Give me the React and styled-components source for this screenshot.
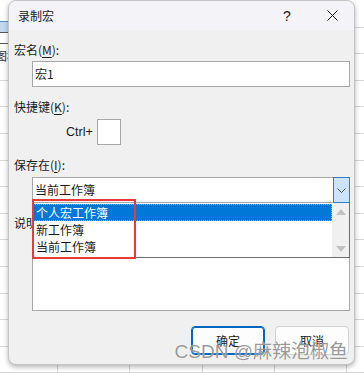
import React from 'react';
import styled, { createGlobalStyle } from 'styled-components';

const GlobalStyle = createGlobalStyle`
    html, body {
        margin: 0;
        padding: 0;
    }
    body {
        width: 364px;
        height: 373px;
        overflow: hidden;
        font-family: "Noto Sans CJK SC", "Liberation Sans", sans-serif;
        font-size: 12px;
        color: #1a1a1a;
    }
`;

// spreadsheet behind the dialog
const Desktop = styled.div`
    position: relative;
    width: 364px;
    height: 373px;
    box-sizing: border-box;
    padding-left: 8px;
    overflow: hidden;
    background-color: #ffffff;
    background-image:
        repeating-linear-gradient(to right, transparent 0 57px, #d6d6d6 57px 58px, transparent 58px 72.3px),
        repeating-linear-gradient(to bottom, transparent 0 25.6px, #d6d6d6 25.6px 26.6px);
    background-position: 0 0, 0 1px;
`;

const SheetCell = styled.div`
    position: absolute;
    left: -2px;
    width: 9px;
    height: 10px;
    top: ${p => p.top}px;
    background: ${p => p.selected ? '#c3d9f0' : '#ffffff'};
    border: 1px solid ${p => p.selected ? '#5b8fc9' : '#5a5a5a'};
`;

const SheetText = styled.span`
    position: absolute;
    left: -5px;
    top: 49px;
    font-size: 12px;
    line-height: 14px;
    color: #333;
`;

const Dialog = styled.div`
    position: relative;
    width: 347px;
    height: 365px;
    box-sizing: border-box;
    background: #f0f0f0;
    border: 1px solid #c4c4c4;
    border-radius: 8px;
    box-shadow: 0 2px 5px rgba(0, 0, 0, 0.3);
    display: flex;
    flex-direction: column;
`;

const TitleBar = styled.div`
    height: 29px;
    flex: none;
    display: flex;
    align-items: center;
    background: #f3f3f8;
    border-radius: 8px 8px 0 0;
    padding-left: 9px;
`;

const Title = styled.div`
    flex: 1;
    font-size: 12px;
    line-height: 16px;
    color: #1a1a1a;
`;

const TitleButton = styled.div`
    width: ${p => p.w}px;
    height: 29px;
    display: flex;
    align-items: center;
    justify-content: center;
    font-family: "Liberation Sans", sans-serif;
    font-size: 14px;
    color: #1a1a1a;
`;

const Body = styled.div`
    flex: 1;
    display: flex;
    flex-direction: column;
    padding: 12px 4px 0 5px;
`;

const Label = styled.div`
    height: 16px;
    line-height: 16px;
    font-size: 12px;
    color: #1a1a1a;
    margin-top: ${p => p.gap || 0}px;

    u {
        text-decoration-thickness: 1px;
        text-underline-offset: 2px;
    }
`;

const Indent = styled.div`
    margin-left: 18px;
    margin-top: ${p => p.gap || 0}px;
    position: relative;
`;

const TextBox = styled.div`
    box-sizing: border-box;
    height: ${p => p.h || 26}px;
    width: ${p => p.w ? `${p.w}px` : '100%'};
    background: #ffffff;
    border: 1px solid #a8a8a8;
    padding-left: 2px;
    display: flex;
    align-items: ${p => p.top ? 'flex-start' : 'center'};
    font-size: 12px;
    line-height: 16px;
`;

const ShortcutRow = styled.div`
    display: flex;
    align-items: center;
    margin-left: 52px;
    margin-top: 4px;
    gap: 4px;
    height: 26px;
`;

const CtrlText = styled.span`
    font-family: "Liberation Sans", sans-serif;
    font-size: 12.5px;
`;

const Combo = styled.div`
    box-sizing: border-box;
    height: 26px;
    background: #ffffff;
    border: 1px solid #a8a8a8;
    display: flex;
    align-items: center;
    padding-left: 2px;
`;

const ComboText = styled.div`
    flex: 1;
    line-height: 16px;
`;

const ComboButton = styled.div`
    box-sizing: border-box;
    width: 17px;
    height: 26px;
    margin: -1px -1px -1px 0;
    background: #cce4f7;
    border: 1px solid #2f7fc9;
    display: flex;
    align-items: center;
    justify-content: center;
`;

const DropList = styled.div`
    position: absolute;
    left: 0;
    right: 0;
    top: 26px;
    height: 55px;
    box-sizing: border-box;
    background: #ffffff;
    border: 1px solid #6e6e6e;
    border-top: none;
    display: flex;
    z-index: 2;
`;

const Items = styled.div`
    flex: 1;
    padding-top: 1px;
`;

const Item = styled.div`
    box-sizing: border-box;
    height: 17px;
    line-height: 15px;
    padding-left: 2px;
    border: 1px ${p => p.active ? 'dotted #f0a64a' : 'solid transparent'};
    background: ${p => p.active ? '#0078d7' : 'transparent'};
    color: ${p => p.active ? '#ffffff' : '#1a1a1a'};
`;

const ScrollBar = styled.div`
    width: 17px;
    background: #f0f0f0;
    display: flex;
    flex-direction: column;
    align-items: center;
    justify-content: space-between;
    padding: 6px 0 5px;
    box-sizing: border-box;
`;

const Arrow = styled.div`
    width: 0;
    height: 0;
    border-left: 5px solid transparent;
    border-right: 5px solid transparent;
    ${p => p.down
        ? 'border-top: 6px solid #c2c2c2;'
        : 'border-bottom: 6px solid #c2c2c2;'}
`;

const Footer = styled.div`
    display: flex;
    justify-content: flex-end;
    gap: 10px;
    margin-top: 15px;
    padding-right: 1px;
`;

const Button = styled.div`
    box-sizing: border-box;
    width: 74px;
    height: 29px;
    border-radius: 4px;
    display: flex;
    align-items: center;
    justify-content: center;
    font-size: 12px;
    background: #fdfdfd;
    border: 1px solid ${p => p.primary ? '#0067c0' : '#d3d3d3'};
    box-shadow: ${p => p.primary ? 'inset 0 0 0 1px #0067c0' : 'none'};
`;

// annotation drawn on top of the screenshot
const Highlight = styled.div`
    position: absolute;
    left: 23px;
    top: 198px;
    width: 104px;
    height: 60px;
    box-sizing: border-box;
    border: 2px solid #e8393b;
    z-index: 3;
`;

const Watermark = styled.div`
    position: absolute;
    right: 6px;
    top: 339px;
    font-family: "Liberation Sans", "Noto Sans CJK SC", sans-serif;
    font-size: 19px;
    line-height: 24px;
    color: rgba(120, 120, 120, 0.75);
    text-shadow: 0 0 1px rgba(255, 255, 255, 0.9);
    white-space: nowrap;
    z-index: 4;
`;

const CloseIcon = () => (
    <svg width="11" height="11" viewBox="0 0 11 11">
        <path d="M0.5 0.5 L10.5 10.5 M10.5 0.5 L0.5 10.5" stroke="#1a1a1a" strokeWidth="1" fill="none" />
    </svg>
);

const Chevron = () => (
    <svg width="9" height="5" viewBox="0 0 9 5">
        <path d="M0.5 0.5 L4.5 4.5 L8.5 0.5" stroke="#505050" strokeWidth="1" fill="none" />
    </svg>
);

const places = ['个人宏工作簿', '新工作簿', '当前工作簿'];

export default function App() {
    return (
        <>
            <GlobalStyle />
            <Desktop>
                <SheetCell top={21} selected />
                <SheetCell top={32} />
                <SheetText>图标</SheetText>
                <Dialog>
                    <TitleBar>
                        <Title>录制宏</Title>
                        <TitleButton w={46}>?</TitleButton>
                        <TitleButton w={44}><CloseIcon /></TitleButton>
                    </TitleBar>
                    <Body>
                        <Label>宏名(<u>M</u>):</Label>
                        <Indent gap={3}>
                            <TextBox>宏1</TextBox>
                        </Indent>

                        <Label gap={12}>快捷键(<u>K</u>):</Label>
                        <ShortcutRow>
                            <CtrlText>Ctrl+</CtrlText>
                            <TextBox w={24} />
                        </ShortcutRow>

                        <Label gap={12}>保存在(<u>I</u>):</Label>
                        <Indent gap={4}>
                            <Combo>
                                <ComboText>当前工作簿</ComboText>
                                <ComboButton><Chevron /></ComboButton>
                            </Combo>
                            <DropList>
                                <Items>
                                    {places.map((p, i) => (
                                        <Item key={p} active={i === 0}>{p}</Item>
                                    ))}
                                </Items>
                                <ScrollBar>
                                    <Arrow />
                                    <Arrow down />
                                </ScrollBar>
                            </DropList>
                        </Indent>

                        <Label gap={12}>说明(<u>D</u>):</Label>
                        <Indent gap={4}>
                            <TextBox h={76} top />
                        </Indent>

                        <Footer>
                            <Button primary>确定</Button>
                            <Button>取消</Button>
                        </Footer>
                    </Body>
                    <Highlight />
                    <Watermark>CSDN @麻辣泡椒鱼</Watermark>
                </Dialog>
            </Desktop>
        </>
    );
}
